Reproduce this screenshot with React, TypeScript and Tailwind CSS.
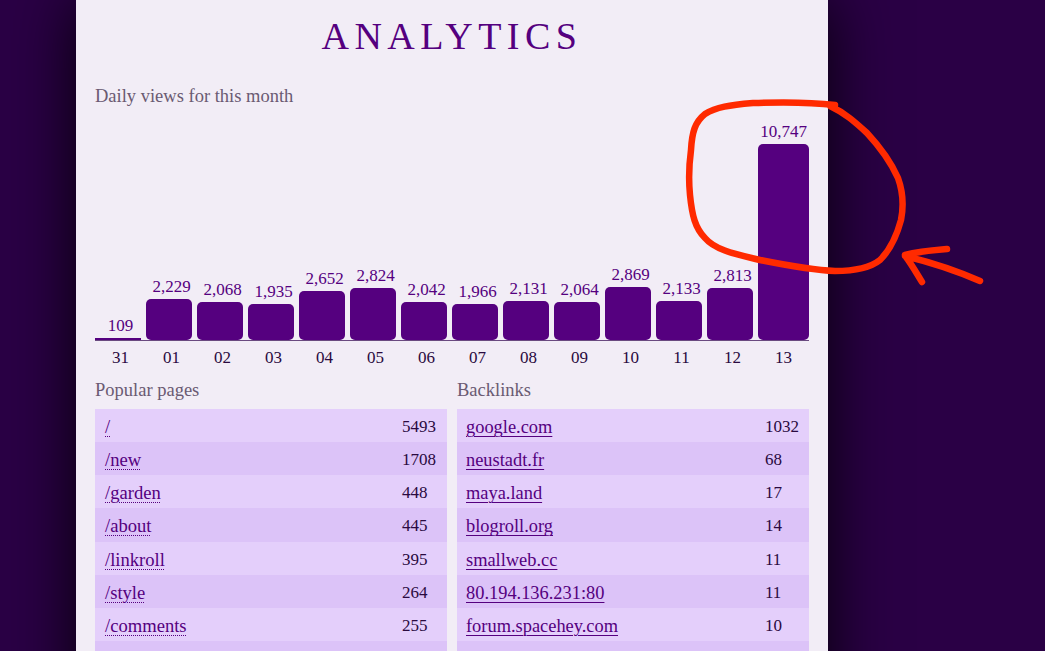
const bars: [string, string, number][] = [
  ["31", "109", 109], ["01", "2,229", 2229], ["02", "2,068", 2068], ["03", "1,935", 1935],
  ["04", "2,652", 2652], ["05", "2,824", 2824], ["06", "2,042", 2042], ["07", "1,966", 1966],
  ["08", "2,131", 2131], ["09", "2,064", 2064], ["10", "2,869", 2869], ["11", "2,133", 2133],
  ["12", "2,813", 2813], ["13", "10,747", 10747],
];
const pages: [string, string][] = [
  ["/", "5493"], ["/new", "1708"], ["/garden", "448"], ["/about", "445"],
  ["/linkroll", "395"], ["/style", "264"], ["/comments", "255"], ["", ""],
];
const links: [string, string][] = [
  ["google.com", "1032"], ["neustadt.fr", "68"], ["maya.land", "17"], ["blogroll.org", "14"],
  ["smallweb.cc", "11"], ["80.194.136.231:80", "11"], ["forum.spacehey.com", "10"], ["", ""],
];

function Table({ title, rows, dotted }: { title: string; rows: [string, string][]; dotted: boolean }) {
  return (
    <div className="min-w-0">
      <h2 className="h-[31px] text-[18.5px] leading-[24px] font-normal text-[#6a5a72]">{title}</h2>
      <div className="flex flex-col">
        {rows.map(([name, n], i) => (
          <div key={i} className={`flex h-[33.14px] shrink-0 items-center pt-[3px] leading-[24px] ${i % 2 === 0 ? "bg-[#e4cffb]" : "bg-[#dcc3f8]"}`}>
            {dotted ? (
              <a className="ml-[10px] flex-1 text-[18.6px] text-[#55007f] underline decoration-dotted decoration-1 underline-offset-[3px]">{name}</a>
            ) : (
              <a className="ml-[9px] flex-1 text-[18.4px] text-[#55007f] underline decoration-solid decoration-1 underline-offset-[3px]">{name}</a>
            )}
            <span className={`${dotted ? "w-[45px]" : "w-[44px]"} text-[17px] text-[#2a0a3f]`}>{n}</span>
          </div>
        ))}
      </div>
    </div>
  );
}

export default function App() {
  return (
    <div className="relative h-[651px] w-full overflow-hidden bg-[#2a0045] font-['Liberation_Serif',serif]">
      <main className="ml-[76px] h-[720px] w-[752px] bg-[#f2edf6] px-[19px] shadow-[0_0_60px_rgba(0,0,0,0.9)]">
        <h1 className="pt-[11px] text-center text-[38px] leading-[50px] font-normal tracking-[5.5px] text-[#55007f]">ANALYTICS</h1>
        <p className="mt-[23px] text-[18.5px] leading-[24px] text-[#6a5a72]">Daily views for this month</p>
        <div className="mt-[12px] grid h-[220px] grid-cols-14 items-end">
          {bars.map(([day, label, v]) => (
            <div key={day} className="flex flex-col items-center">
              <span className="mb-[3px] text-[17px] leading-[18px] text-[#55007f]">{label}</span>
              <div
                className={`self-start bg-[#55007f] ${day === "13" ? "w-full" : "w-[46px]"} ${v > 200 ? "rounded-[5px]" : ""}`}
                style={{ height: Math.ceil((v / 10747) * 196) }}
              />
            </div>
          ))}
        </div>
        <div className="h-[1px] bg-[#6a4a80]" />
        <div className="mt-[6px] grid grid-cols-14">
          {bars.map(([day]) => (
            <span key={day} className="text-center text-[17px] leading-[22px] text-[#2a0a3f]">{day}</span>
          ))}
        </div>
        <div className="mt-[9px] grid grid-cols-2 gap-x-[10px]">
          <Table title="Popular pages" rows={pages} dotted />
          <Table title="Backlinks" rows={links} dotted={false} />
        </div>
      </main>
      <svg className="pointer-events-none absolute inset-0" width="1045" height="651" fill="none" stroke="#ff2a00" strokeWidth="6.5" strokeLinecap="round" strokeLinejoin="round">
        <path d="M835 105 C810 102 780 102 753 103 C730 105 716 107 705 114 C695 122 692 132 691 150 C689 165 689 185 690 195 C692 215 695 228 705 238 C715 250 735 254 760 260 C785 265 810 270 835 271 C855 271 870 268 880 260 C890 250 897 235 901 220 C904 205 903 192 898 178 C890 160 880 147 867 133 C855 122 845 113 830 106" />
        <path d="M980 281 C955 270 930 262 905 256 M905 255 C920 251 935 250 947 249 M906 257 C912 265 917 274 922 282" />
      </svg>
    </div>
  );
}
